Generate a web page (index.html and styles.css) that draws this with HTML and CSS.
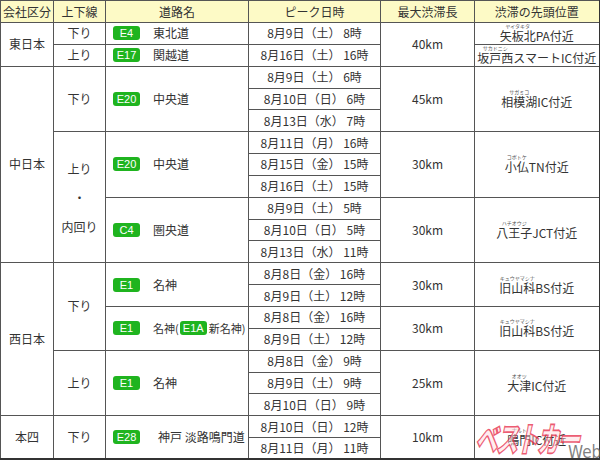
FILE: index.html
```html
<!DOCTYPE html>
<html lang="ja">
<head>
<meta charset="utf-8">
<link rel="stylesheet" href="styles.css">
</head>
<body>
<div class="wrap">
<table class="jam">
<colgroup>
<col class="c1"><col class="c2"><col class="c3"><col class="c4"><col class="c5"><col class="c6">
</colgroup>
<thead>
<tr><th>会社区分</th><th>上下線</th><th>道路名</th><th>ピーク日時</th><th>最大渋滞長</th><th>渋滞の先頭位置</th></tr>
</thead>
<tbody>
<tr>
<td rowspan="2" class="co">東日本</td>
<td>下り</td>
<td class="road"><div class="rd"><span class="b">E4</span><span>東北道</span></div></td>
<td class="dt">8月9日（土） 8時</td>
<td rowspan="2" class="km">40km</td>
<td class="loc"><span class="rb"><span class="fu">ヤイタキタ</span><span>矢板北</span></span>PA付近</td>
</tr>
<tr>
<td>上り</td>
<td class="road"><div class="rd"><span class="b">E17</span><span>関越道</span></div></td>
<td class="dt">8月16日（土） 16時</td>
<td class="loc"><span class="rb"><span class="fu">サカドニシ</span><span>坂戸西</span></span>スマートIC付近</td>
</tr>
<tr>
<td rowspan="9" class="co">中日本</td>
<td rowspan="3">下り</td>
<td rowspan="3" class="road"><div class="rd"><span class="b">E20</span><span>中央道</span></div></td>
<td class="dt">8月9日（土） 6時</td>
<td rowspan="3" class="km">45km</td>
<td rowspan="3" class="loc"><span class="rb"><span class="fu">サガミコ</span><span>相模湖</span></span>IC付近</td>
</tr>
<tr><td class="dt">8月10日（日） 6時</td></tr>
<tr><td class="dt">8月13日（水） 7時</td></tr>
<tr>
<td rowspan="6" class="dir3">上り<br>・<br>内回り</td>
<td rowspan="3" class="road"><div class="rd"><span class="b">E20</span><span>中央道</span></div></td>
<td class="dt">8月11日（月） 16時</td>
<td rowspan="3" class="km">30km</td>
<td rowspan="3" class="loc"><span class="rb"><span class="fu">コボトケ</span><span>小仏</span></span>TN付近</td>
</tr>
<tr><td class="dt">8月15日（金） 15時</td></tr>
<tr><td class="dt">8月16日（土） 15時</td></tr>
<tr>
<td rowspan="3" class="road"><div class="rd"><span class="b">C4</span><span>圏央道</span></div></td>
<td class="dt">8月9日（土） 5時</td>
<td rowspan="3" class="km">30km</td>
<td rowspan="3" class="loc"><span class="rb"><span class="fu">ハチオウジ</span><span>八王子</span></span>JCT付近</td>
</tr>
<tr><td class="dt">8月10日（日） 5時</td></tr>
<tr><td class="dt">8月13日（水） 11時</td></tr>
<tr>
<td rowspan="7" class="co">西日本</td>
<td rowspan="4">下り</td>
<td rowspan="2" class="road"><div class="rd"><span class="b">E1</span><span>名神</span></div></td>
<td class="dt">8月8日（金） 16時</td>
<td rowspan="2" class="km">30km</td>
<td rowspan="2" class="loc"><span class="rb"><span class="fu">キュウヤマシナ</span><span>旧山科</span></span>BS付近</td>
</tr>
<tr><td class="dt">8月9日（土） 12時</td></tr>
<tr>
<td rowspan="2" class="road"><div class="rd"><span class="b">E1</span><span class="mix">名神(<span class="b">E1A</span>新名神)</span></div></td>
<td class="dt">8月8日（金） 16時</td>
<td rowspan="2" class="km">30km</td>
<td rowspan="2" class="loc"><span class="rb"><span class="fu">キュウヤマシナ</span><span>旧山科</span></span>BS付近</td>
</tr>
<tr><td class="dt">8月9日（土） 12時</td></tr>
<tr>
<td rowspan="3">上り</td>
<td rowspan="3" class="road"><div class="rd"><span class="b">E1</span><span>名神</span></div></td>
<td class="dt">8月8日（金） 9時</td>
<td rowspan="3" class="km">25km</td>
<td rowspan="3" class="loc"><span class="rb"><span class="fu">オオツ</span><span>大津</span></span>IC付近</td>
</tr>
<tr><td class="dt">8月9日（土） 9時</td></tr>
<tr><td class="dt">8月10日（日） 9時</td></tr>
<tr>
<td rowspan="2" class="co">本四</td>
<td rowspan="2">下り</td>
<td rowspan="2" class="road"><div class="rd wide"><span class="b">E28</span><span>神戸 淡路鳴門道</span></div></td>
<td class="dt">8月10日（日） 12時</td>
<td rowspan="2" class="km">10km</td>
<td rowspan="2" class="loc"><span class="rb"><span class="fu">ナルト</span><span>鳴門</span></span>IC付近</td>
</tr>
<tr><td class="dt">8月11日（月） 11時</td></tr>
</tbody>
</table>
<div class="logo"><span class="bc">ベストカー</span><span class="web">Web</span></div>
</div>
</body>
</html>
```
FILE: styles.css
```css
body {
  margin: 0;
  background: #fff;
  font-family: "Noto Sans CJK JP", sans-serif;
  color: #333;
}
.wrap {
  position: relative;
  width: 600px;
  height: 462px;
  overflow: hidden;
}
.jam {
  border-collapse: collapse;
  table-layout: fixed;
  width: 599px;
  font-size: 12px;
  border-left: 1px solid #444;
  border-top: 1px solid #444;
  border-right: 2px solid #333;
  border-bottom: 2px solid #333;
}
.c1 { width: 53px; }
.c2 { width: 52px; }
.c3 { width: 143px; }
.c4 { width: 132px; }
.c5 { width: 94px; }
.c6 { width: 125px; }
.jam th,
.jam td {
  border: 1px solid #555;
  padding: 0;
  text-align: center;
  vertical-align: middle;
  line-height: 14px;
  font-weight: normal;
  white-space: nowrap;
}
.jam th {
  background: #fdfac6;
  height: 21px;
}
.jam tbody tr {
  height: 21.85px;
}
.dir3 { line-height: 29px !important; }
.road { text-align: left !important; padding-left: 7px !important; }
.rd {
  display: flex;
  align-items: center;
  gap: 13px;
}
.rd.wide { gap: 18px; }
.b {
  display: inline-block;
  width: 27px;
  height: 14px;
  line-height: 14px;
  border-radius: 3px;
  background: #1fb41f;
  color: #fff;
  font-family: "Liberation Sans", sans-serif;
  font-size: 11px;
  text-align: center;
}
.mix {
  display: inline-flex;
  align-items: center;
  font-size: 11px;
}
.mix .b { margin: 0 2px 0 1px; }
.dt { white-space: pre !important; }
.rb {
  display: inline-flex;
  flex-direction: column;
  align-items: center;
  vertical-align: bottom;
}
.fu {
  font-size: 5px;
  line-height: 6px;
  color: #555;
  white-space: nowrap;
}
.logo {
  position: absolute;
  left: 482px;
  top: 418px;
  width: 118px;
  height: 44px;
  pointer-events: none;
}
.bc {
  position: absolute;
  left: 0;
  top: 0;
  font-family: "Noto Sans CJK JP", sans-serif;
  font-weight: 900;
  font-size: 34px;
  line-height: 40px;
  letter-spacing: -3px;
  white-space: nowrap;
  color: rgba(255, 215, 220, 0.45);
  -webkit-text-stroke: 1.6px rgba(230, 40, 70, 0.75);
  transform: scaleX(0.66) skewX(-18deg);
  transform-origin: left top;
}
.web {
  position: absolute;
  left: 86px;
  top: 25px;
  font-family: "DejaVu Sans Condensed", "DejaVu Sans", sans-serif;
  font-size: 17px;
  line-height: 19px;
  color: rgba(105, 105, 105, 0.85);
}
```
